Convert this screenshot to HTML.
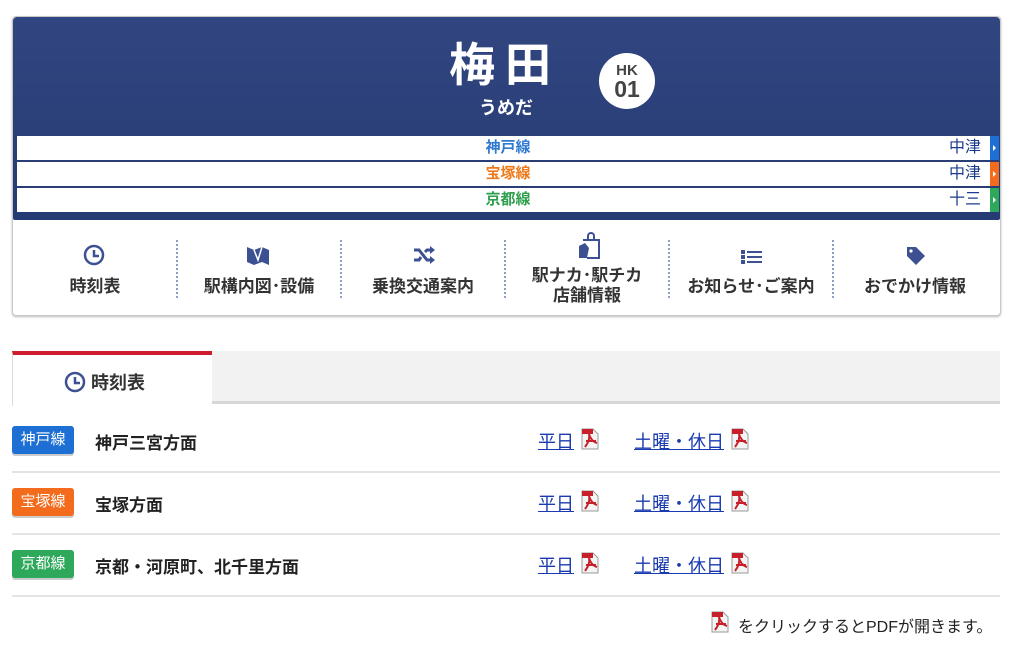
<!DOCTYPE html>
<html><head><meta charset="utf-8"><style>
*{margin:0;padding:0;box-sizing:border-box}
body{width:1024px;height:650px;background:#fff;font-family:"Liberation Sans","Noto Sans CJK JP",sans-serif;position:relative;overflow:hidden}
.card{position:absolute;left:12px;top:16px;width:989px;height:300px;border:1px solid #c8c8c8;border-radius:4px;box-shadow:0 1px 2px #bbb;background:#fff}
.hd{position:absolute;left:0;top:0;width:987px;height:203px;background:linear-gradient(#314580,#263a73);border-radius:4px 4px 2px 2px}
.name{position:absolute;left:436px;top:18px;color:#fff;font-size:46px;font-weight:bold;letter-spacing:10px;line-height:60px}
.yomi{position:absolute;left:466px;top:77px;color:#fff;font-size:18px;font-weight:bold}
.num{position:absolute;left:586px;top:36px;width:56px;height:56px;border-radius:50%;background:#fff;color:#444;text-align:center;font-weight:bold;line-height:1}
.row{position:absolute;left:4px;width:982px;height:24px;background:#fff;font-size:15px;line-height:24px}
.row .l{position:absolute;left:0;width:982px;text-align:center;font-weight:bold}
.row .r{position:absolute;right:18px;color:#1b3c8c;font-size:16px}
.row .a{position:absolute;right:0;top:0;width:9px;height:24px}
.row .a:after{content:"";position:absolute;left:3px;top:9px;border-left:3px solid #fff;border-top:3px solid transparent;border-bottom:3px solid transparent}
.nav{position:absolute;top:203px;left:0;width:987px;height:95px}
.it{position:absolute;top:0;width:164px;height:95px;text-align:center;color:#333;font-size:17px;font-weight:bold}
.it .t{position:absolute;left:0;width:164px;line-height:20px}
.sep{position:absolute;top:20px;height:58px;border-left:2px dotted #8da0c6}
.tab{position:absolute;left:12px;top:351px;width:200px;height:55px;border-top:4px solid #cf1c2c;background:#fff;border-left:1px solid #ddd}
.bar{position:absolute;left:212px;top:351px;width:788px;height:53px;background:#f2f2f2;border-bottom:3px solid #d6d6d6}
.tl{position:absolute;left:12px;width:988px;height:2px;background:#e4e4e4}
.bd{position:absolute;left:12px;width:62px;height:28px;border-radius:3px;color:#fff;font-size:15px;text-align:center;line-height:28px;box-shadow:0 2px 0 rgba(0,0,0,.2)}
.dn{position:absolute;left:95px;font-size:17px;font-weight:bold;color:#222}
.lk{position:absolute;color:#1a3bb0;text-decoration:underline;font-size:18px}
.pdf{position:absolute;width:18px;height:22px}
</style></head><body>
<div class="card">
 <div class="hd">
  <div class="name">梅田</div>
  <div class="yomi">うめだ</div>
  <div class="num"><div style="font-size:15px;margin-top:10px">HK</div><div style="font-size:23px">01</div></div>
  <div class="row" style="top:119px"><span class="l" style="color:#2f7ad0">神戸線</span><span class="r">中津</span><span class="a" style="background:#1d6fd3"></span></div>
  <div class="row" style="top:145px"><span class="l" style="color:#ef7a1a">宝塚線</span><span class="r">中津</span><span class="a" style="background:#f36b1c"></span></div>
  <div class="row" style="top:171px"><span class="l" style="color:#2ea04d">京都線</span><span class="r">十三</span><span class="a" style="background:#2ea85a"></span></div>
 </div>
 <div class="nav">
  <div class="it" style="left:0"><svg style="position:absolute;left:70px;top:24px" width="22" height="22" viewBox="0 0 22 22"><circle cx="11" cy="11" r="9" fill="none" stroke="#3d5192" stroke-width="2.5"/><path d="M11 6v6h5" fill="none" stroke="#3d5192" stroke-width="2.5"/></svg><div class="t" style="top:57px">時刻表</div></div>
  <div class="sep" style="left:163px"></div>
  <div class="it" style="left:164px"><svg style="position:absolute;left:69px;top:24px" width="24" height="22" viewBox="0 0 24 22"><path d="M1 3l7 3 8-3 7 3v15l-7-3-8 3-7-3z" fill="#3d5192"/><path d="M8 6l4 10 4-13" fill="none" stroke="#fff" stroke-width="1.5"/></svg><div class="t" style="top:57px">駅構内図･設備</div></div>
  <div class="sep" style="left:327px"></div>
  <div class="it" style="left:328px"><svg style="position:absolute;left:72px;top:26px" width="22" height="18" viewBox="0 0 22 18"><path d="M1 4h5l8 10h5M1 14h5l2-3M12 6l2-2h5" fill="none" stroke="#3d5192" stroke-width="3"/><path d="M17 0l5 4-5 4zM17 10l5 4-5 4z" fill="#3d5192"/></svg><div class="t" style="top:57px">乗換交通案内</div></div>
  <div class="sep" style="left:491px"></div>
  <div class="it" style="left:492px"><svg style="position:absolute;left:72px;top:12px" width="24" height="28" viewBox="0 0 24 28"><path d="M6 8h16v18H10" fill="none" stroke="#3d5192" stroke-width="2"/><path d="M11 8V4a3 3 0 0 1 6 0v4" fill="none" stroke="#3d5192" stroke-width="2"/><path d="M2 14l6-3 4 5-2 10H2z" fill="#3d5192"/></svg><div class="t" style="top:46px">駅ナカ･駅チカ<br>店舗情報</div></div>
  <div class="sep" style="left:655px"></div>
  <div class="it" style="left:656px"><svg style="position:absolute;left:72px;top:30px" width="22" height="14" viewBox="0 0 22 14"><g fill="#3d5192"><rect x="0" y="0" width="4" height="4"/><rect x="0" y="5" width="4" height="4"/><rect x="0" y="10" width="4" height="4"/><rect x="6" y="1" width="15" height="2"/><rect x="6" y="6" width="15" height="2"/><rect x="6" y="11" width="15" height="2"/></g></svg><div class="t" style="top:57px">お知らせ･ご案内</div></div>
  <div class="sep" style="left:819px"></div>
  <div class="it" style="left:820px"><svg style="position:absolute;left:72px;top:25px" width="22" height="22" viewBox="0 0 22 22"><path d="M2 2h9l9 9-9 9-9-9z" fill="#3d5192"/><circle cx="6" cy="6" r="1.6" fill="#fff"/></svg><div class="t" style="top:57px">おでかけ情報</div></div>
 </div>
</div>

<div class="bar"></div>
<div class="tab"><svg style="position:absolute;left:51px;top:16px" width="22" height="22" viewBox="0 0 22 22"><circle cx="11" cy="11" r="9" fill="none" stroke="#3d5192" stroke-width="2.5"/><path d="M11 6v6h5" fill="none" stroke="#3d5192" stroke-width="2.5"/></svg><span style="position:absolute;left:78px;top:14px;font-size:18px;font-weight:bold;color:#333">時刻表</span></div>

<div class="bd" style="top:426px;background:#1d6fd3">神戸線</div>
<div class="dn" style="top:429px">神戸三宮方面</div>
<div class="tl" style="top:471px"></div>
<div class="bd" style="top:488px;background:#f36b1c">宝塚線</div>
<div class="dn" style="top:491px">宝塚方面</div>
<div class="tl" style="top:533px"></div>
<div class="bd" style="top:550px;background:#2ea85a">京都線</div>
<div class="dn" style="top:553px">京都・河原町、北千里方面</div>
<div class="tl" style="top:595px"></div>

<span class="lk" style="left:538px;top:428px">平日</span><span class="lk" style="left:634px;top:428px">土曜・休日</span>
<span class="lk" style="left:538px;top:490px">平日</span><span class="lk" style="left:634px;top:490px">土曜・休日</span>
<span class="lk" style="left:538px;top:552px">平日</span><span class="lk" style="left:634px;top:552px">土曜・休日</span>

<svg width="0" height="0" style="position:absolute"><defs><symbol id="p" viewBox="0 0 18 22"><path d="M1 1h11l5 5v15H1z" fill="#f4f4f4" stroke="#999"/><path d="M1 1h11v5H1z" fill="#c8202a"/><path d="M4 19c3-4 5-9 4-13M8 6c1 4 4 8 8 9M5 13h10" fill="none" stroke="#c8202a" stroke-width="2"/></symbol></defs></svg>
<svg class="pdf" style="left:581px;top:428px"><use href="#p"/></svg><svg class="pdf" style="left:731px;top:428px"><use href="#p"/></svg>
<svg class="pdf" style="left:581px;top:490px"><use href="#p"/></svg><svg class="pdf" style="left:731px;top:490px"><use href="#p"/></svg>
<svg class="pdf" style="left:581px;top:552px"><use href="#p"/></svg><svg class="pdf" style="left:731px;top:552px"><use href="#p"/></svg>
<svg class="pdf" style="left:711px;top:611px"><use href="#p"/></svg>
<span style="position:absolute;left:738px;top:613px;font-size:16px;color:#222">をクリックするとPDFが開きます。</span>
</body></html>
